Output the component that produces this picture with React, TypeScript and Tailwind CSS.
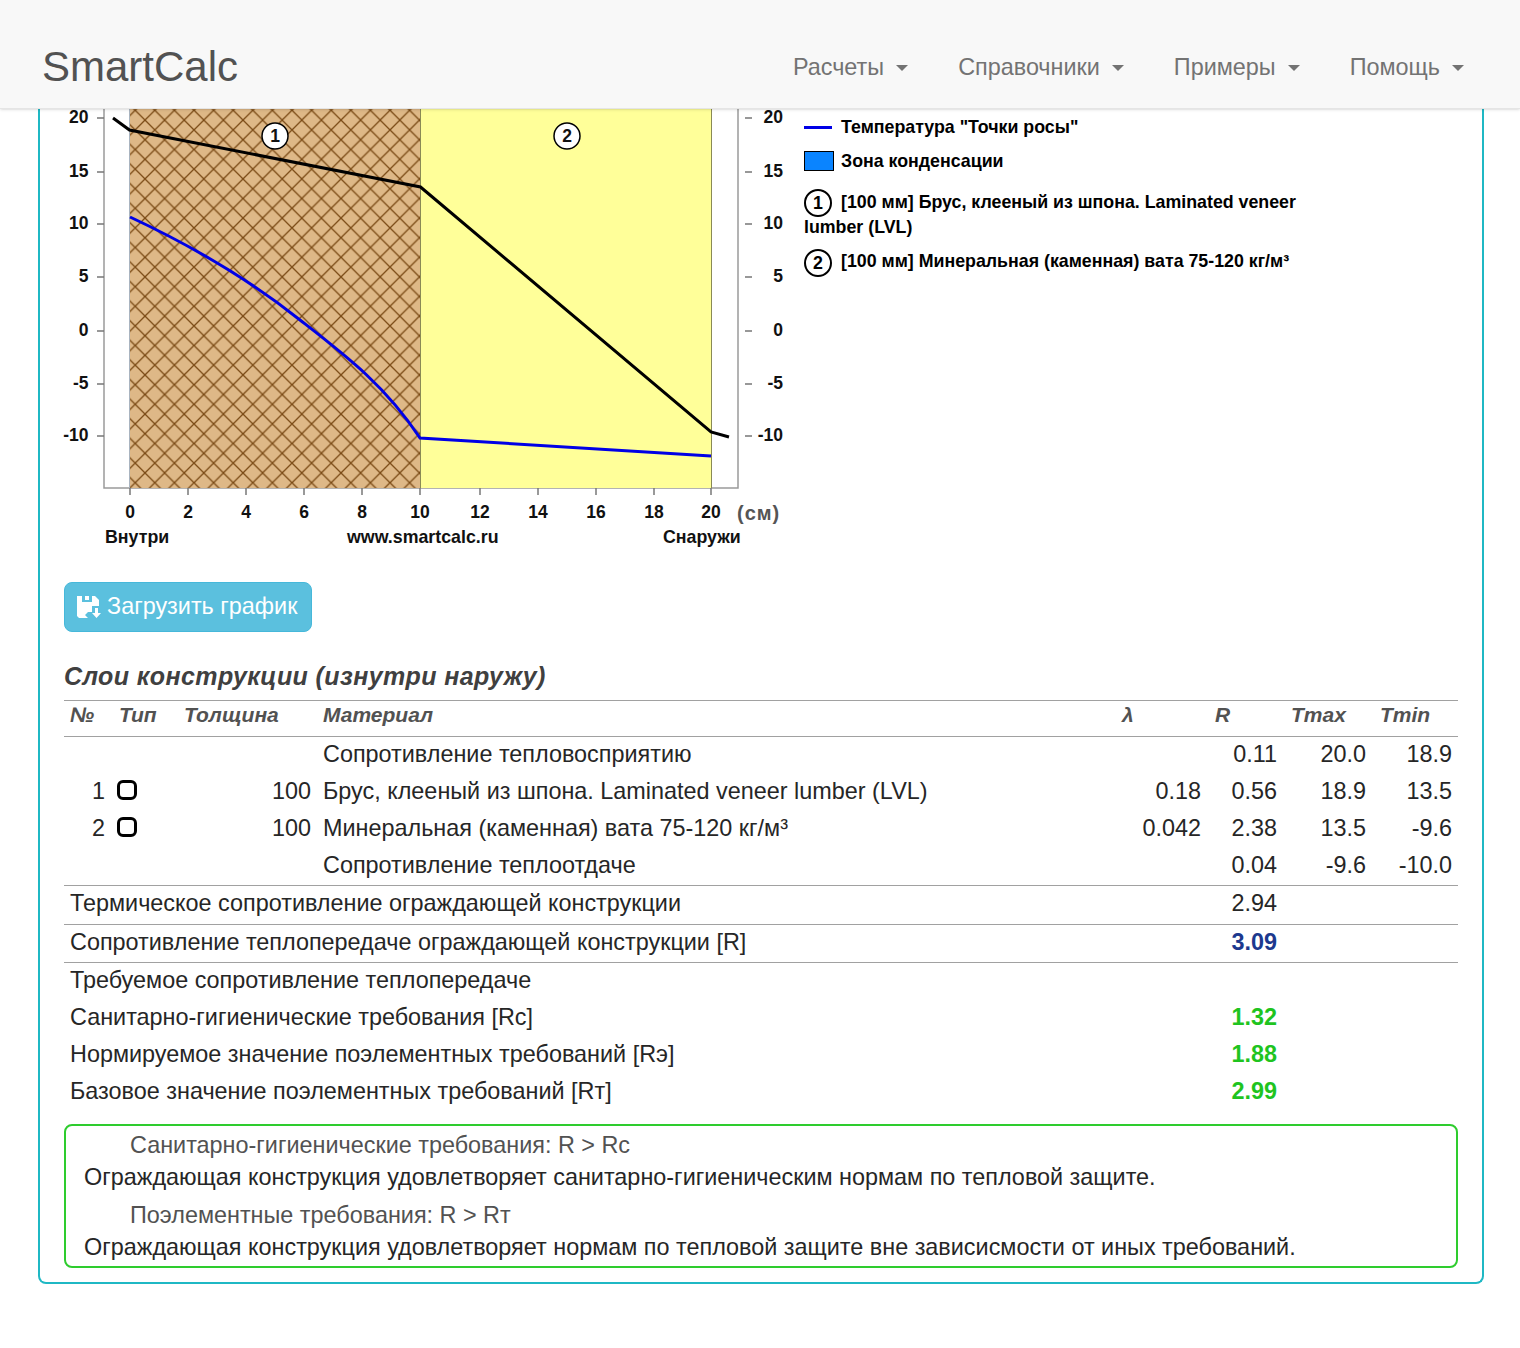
const NAV = ["Расчеты", "Справочники", "Примеры", "Помощь"];

const Y_TICKS = [
  { label: "20", y: 117 },
  { label: "15", y: 171 },
  { label: "10", y: 223 },
  { label: "5", y: 276 },
  { label: "0", y: 330 },
  { label: "-5", y: 383 },
  { label: "-10", y: 435 },
];

const X_TICKS = [
  { label: "0", x: 130 },
  { label: "2", x: 188 },
  { label: "4", x: 246 },
  { label: "6", x: 304 },
  { label: "8", x: 362 },
  { label: "10", x: 420 },
  { label: "12", x: 480 },
  { label: "14", x: 538 },
  { label: "16", x: 596 },
  { label: "18", x: 654 },
  { label: "20", x: 711 },
];

const LAYERS = [
  { no: "", name: "Сопротивление тепловосприятию", l: "", r: "0.11", max: "20.0", min: "18.9" },
  { no: "1", name: "Брус, клееный из шпона. Laminated veneer lumber (LVL)", l: "0.18", r: "0.56", max: "18.9", min: "13.5" },
  { no: "2", name: "Минеральная (каменная) вата 75-120 кг/м³", l: "0.042", r: "2.38", max: "13.5", min: "-9.6" },
  { no: "", name: "Сопротивление теплоотдаче", l: "", r: "0.04", max: "-9.6", min: "-10.0" },
];

const REQUIRED = [
  { name: "Санитарно-гигиенические требования [Rс]", r: "1.32" },
  { name: "Нормируемое значение поэлементных требований [Rэ]", r: "1.88" },
  { name: "Базовое значение поэлементных требований [Rт]", r: "2.99" },
];

const COLS = "grid grid-cols-[49px_65px_139px_1fr_93px_76px_89px_86px]";

function Chart() {
  return (
    <svg
      viewBox="40 109 760 457"
      className="h-[457px] w-[760px] shrink-0 overflow-visible"
      fontWeight="700"
      fontSize="17.5"
      fill="#111"
    >
      <defs>
        <pattern id="hatch" width="19.6" height="19.6" patternUnits="userSpaceOnUse" x="145" y="453.3">
          <path d="M0 0L19.6 19.6M19.6 0L0 19.6" stroke="#7a4a15" strokeWidth="1.3" />
        </pattern>
      </defs>
      <path d="M104 109V488H738V109" fill="none" stroke="#9a9a9a" strokeWidth="1.5" />
      <rect x="129.5" y="109" width="291" height="379" fill="#deb887" />
      <rect x="129.5" y="109" width="291" height="379" fill="url(#hatch)" />
      <rect x="420.5" y="109" width="291" height="379" fill="#ffff99" />
      <path d="M129.5 109V488" stroke="#a9b4c0" strokeWidth="1" />
      <path d="M420.5 109V488M711.5 109V488" stroke="#8a8a55" strokeWidth="1" />
      {Y_TICKS.map((t) => (
        <g key={t.label}>
          <path d={`M97 ${t.y + 1}H104M745 ${t.y + 1}H752`} stroke="#777" strokeWidth="1.5" />
          <text x="88.5" y={t.y + 6} textAnchor="end">{t.label}</text>
          <text x="783" y={t.y + 6} textAnchor="end">{t.label}</text>
        </g>
      ))}
      {X_TICKS.map((t) => (
        <g key={t.label}>
          <path d={`M${t.x} 488V495`} stroke="#777" strokeWidth="1.5" />
          <text x={t.x} y="518" textAnchor="middle">{t.label}</text>
        </g>
      ))}
      <text x="737" y="520" fontSize="20" fill="#555" letterSpacing="1">(см)</text>
      <text x="105" y="543" fontSize="17.8">Внутри</text>
      <text x="347" y="543" fontSize="17.8">www.smartcalc.ru</text>
      <text x="663" y="543" fontSize="17.8">Снаружи</text>
      <polyline points="113,118 129.5,130 420.5,187 711,432 729,437" fill="none" stroke="#000" strokeWidth="3" />
      <path
        d="M130 217C190 245 250 280 300 320C345 355 385 385 420 438L711 456"
        fill="none"
        stroke="#0000e6"
        strokeWidth="3"
      />
      {[
        { n: "1", x: 275 },
        { n: "2", x: 567 },
      ].map((c) => (
        <g key={c.n}>
          <circle cx={c.x} cy="136" r="13" fill="#fff" stroke="#000" strokeWidth="1.5" />
          <text x={c.x} y="142" textAnchor="middle">{c.n}</text>
        </g>
      ))}
    </svg>
  );
}

function Num({ n }: { n: string }) {
  return (
    <span className="-my-0.5 mr-2.25 inline-flex h-7 w-7 items-center justify-center rounded-full border-2 border-black align-middle font-bold">
      {n}
    </span>
  );
}

function Legend() {
  return (
    <div className="ml-1 w-[500px] pt-1.5 text-[17.8px] font-bold leading-6 text-black">
      <div className="flex items-center gap-2.25">
        <span className="h-0.75 w-7 bg-[#0000e6]" />
        <span>Температура "Точки росы"</span>
      </div>
      <div className="mt-2.5 flex items-center gap-1.75">
        <span className="h-5 w-7.5 border border-black bg-[#0a84ff]" />
        <span>Зона конденсации</span>
      </div>
      <p className="mt-4.25">
        <Num n="1" />
        [100 мм] Брус, клееный из шпона. Laminated veneer lumber (LVL)
      </p>
      <p className="mt-2.5">
        <Num n="2" />
        [100 мм] Минеральная (каменная) вата 75-120 кг/м³
      </p>
    </div>
  );
}

function FloppySave() {
  return (
    <svg viewBox="0 0 24 24" className="h-6 w-6" fill="#fff">
      <path
        fillRule="evenodd"
        d="M0 1H5V7H15V1H18L22 5V11H15V17H11L8 20L11 23H2L0 21ZM8 1H12V5H8Z"
      />
      <path d="M18 13H21V18H24L19.5 23L15 18H18Z" />
    </svg>
  );
}

export default function App() {
  return (
    <div
      className="h-[1348px] overflow-hidden bg-white text-[23.4px] text-neutral-800"
      style={{ fontFamily: '"Liberation Sans", Arial, sans-serif' }}
    >
      <nav className="relative z-10 flex h-[109px] items-center justify-between border-b border-neutral-200 bg-[#f8f8f8] pl-10.5 pr-14 pt-6 shadow-sm">
        <span className="text-[42px] text-neutral-600">SmartCalc</span>
        <ul className="mt-1 flex gap-12.5 text-neutral-500">
          {NAV.map((item) => (
            <li key={item} className="flex items-center gap-3">
              {item}
              <span className="border-x-[6px] border-t-[6px] border-x-transparent border-t-neutral-500" />
            </li>
          ))}
        </ul>
      </nav>

      <main className="ml-[38px] mr-9 rounded-b-lg border-x-2 border-b-2 border-[#1fb8c4] pb-3.5">
        <div className="flex">
          <Chart />
          <Legend />
        </div>

        <div className="px-6">
          <button className="mt-4 flex h-[50px] items-center gap-1.5 rounded-lg border border-[#46b8da] bg-[#5bc0de] pl-3 pr-3.5 text-white">
            <FloppySave />
            Загрузить график
          </button>

          <h2 className="mt-7 text-[25px] font-bold italic leading-8 tracking-[0.4px] text-neutral-700">
            Слои конструкции (изнутри наружу)
          </h2>

          <div className={`${COLS} mt-2 border-y border-neutral-400 pb-1.75 text-[21px] font-bold italic leading-7 text-neutral-600`}>
            <span className="px-1.5">№</span>
            <span className="px-1.5">Тип</span>
            <span className="px-1.5">Толщина</span>
            <span className="px-1.5">Материал</span>
            <span className="pl-2">λ</span>
            <span className="pl-2">R</span>
            <span className="pl-2">Tmax</span>
            <span className="pl-2">Tmin</span>
          </div>

          {LAYERS.map((row, i) => (
            <div key={i} className={`${COLS} pb-1 pt-px leading-8`}>
              <span className="pr-2 text-right">{row.no}</span>
              <span className="flex items-center pl-1">
                {row.no && <span className="-mt-0.5 h-5 w-5 rounded-md border-[3px] border-black" />}
              </span>
              <span className="px-1.5 text-right">{row.no && "100"}</span>
              <span className="px-1.5">{row.name}</span>
              <span className="px-1.5 text-right">{row.l}</span>
              <span className="px-1.5 text-right">{row.r}</span>
              <span className="px-1.5 text-right">{row.max}</span>
              <span className="px-1.5 text-right">{row.min}</span>
            </div>
          ))}

          <div className={`${COLS} border-t border-neutral-400 pb-1.25 pt-px leading-8`}>
            <span className="col-span-5 px-1.5">Термическое сопротивление ограждающей конструкции</span>
            <span className="px-1.5 text-right">2.94</span>
          </div>
          <div className={`${COLS} border-t border-neutral-400 pb-1 pt-px leading-8`}>
            <span className="col-span-5 px-1.5">Сопротивление теплопередаче ограждающей конструкции [R]</span>
            <span className="px-1.5 text-right font-bold text-blue-900">3.09</span>
          </div>
          <div className={`${COLS} border-t border-neutral-400 pb-1 pt-px leading-8`}>
            <span className="col-span-5 px-1.5">Требуемое сопротивление теплопередаче</span>
          </div>
          {REQUIRED.map((row) => (
            <div key={row.r} className={`${COLS} pb-1 pt-px leading-8`}>
              <span className="col-span-5 px-1.5">{row.name}</span>
              <span className="px-1.5 text-right font-bold text-[#1fc41f]">{row.r}</span>
            </div>
          ))}

          <div className="mt-3.25 rounded-lg border-2 border-[#2ecc2e] px-4.5 pb-0.75 pt-0.75 leading-8">
            <p className="pl-11.5 text-neutral-600">Санитарно-гигиенические требования: R &gt; Rс</p>
            <p>Ограждающая конструкция удовлетворяет санитарно-гигиеническим нормам по тепловой защите.</p>
            <p className="mt-1.5 pl-11.5 text-neutral-600">Поэлементные требования: R &gt; Rт</p>
            <p>Ограждающая конструкция удовлетворяет нормам по тепловой защите вне зависисмости от иных требований.</p>
          </div>
        </div>
      </main>
    </div>
  );
}
